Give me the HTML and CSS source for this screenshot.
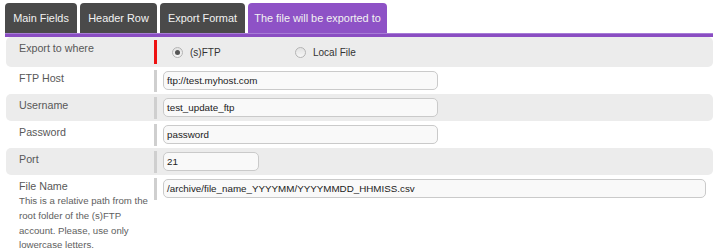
FILE: index.html
```html
<!DOCTYPE html>
<html>
<head>
<meta charset="utf-8">
<link rel="stylesheet" href="styles.css">
</head>
<body>
<div class="page">
  <div class="tabs">
    <div class="tab t1">Main Fields</div>
    <div class="tab t2">Header Row</div>
    <div class="tab t3">Export Format</div>
    <div class="tab t4 active">The file will be exported to</div>
  </div>
  <div class="tabline"></div>
  <div class="rows">
    <div class="row gray tall">
      <div class="label">Export to where</div>
      <div class="sep red"></div>
      <div class="control radios">
        <label class="opt first"><span class="radio checked"></span><span>(s)FTP</span></label>
        <label class="opt"><span class="radio"></span><span>Local File</span></label>
      </div>
    </div>
    <div class="row">
      <div class="label">FTP Host</div>
      <div class="sep"></div>
      <div class="control"><div class="input mid">ftp://test.myhost.com</div></div>
    </div>
    <div class="row gray">
      <div class="label">Username</div>
      <div class="sep"></div>
      <div class="control"><div class="input mid">test_update_ftp</div></div>
    </div>
    <div class="row">
      <div class="label">Password</div>
      <div class="sep"></div>
      <div class="control"><div class="input mid">password</div></div>
    </div>
    <div class="row gray">
      <div class="label">Port</div>
      <div class="sep"></div>
      <div class="control"><div class="input short">21</div></div>
    </div>
    <div class="row">
      <div class="label"><div class="name">File Name</div>
        <div class="help">This is a relative path from the root folder of the (s)FTP account. Please, use only lowercase letters.</div>
      </div>
      <div class="sep"></div>
      <div class="control"><div class="input long">/archive/file_name_YYYYMM/YYYYMMDD_HHMISS.csv</div></div>
    </div>
  </div>
</div>
</body>
</html>
```

FILE: styles.css
```css
* { box-sizing: border-box; }
html, body { margin: 0; padding: 0; background: #fff; }
body {
  font-family: "Liberation Sans", Arial, sans-serif;
  width: 718px;
  height: 250px;
  overflow: hidden;
}
.page { padding: 3px 5px 0 5px; }
.tabs { display: flex; gap: 3px; }
.tab {
  height: 30px;
  display: flex;
  align-items: center;
  justify-content: center;
  background: #4a4a4a;
  color: #f2f2f2;
  font-size: 10.9px;
  border-radius: 4px 4px 0 0;
  white-space: nowrap;
}
.tab.t1 { width: 72px; }
.tab.t2 { width: 77px; }
.tab.t3 { width: 85px; }
.tab.t4 { width: 139px; }
.tab.active { background: #8e52c6; }
.tabline {
  height: 4px;
  background: #8a4dc2;
  border-top: 1px solid #a77cd6;
}
.rows { padding-left: 1px; }
.row {
  display: flex;
  align-items: flex-start;
  padding: 3px 0 2px;
  border-radius: 5px;
}
.row.gray { background: #ececec; }
.row.tall { padding: 3px 0 3px; }
.label {
  width: 148px;
  flex: none;
  padding: 1px 5px 0 13px;
  font-size: 10.7px;
  line-height: 15px;
  color: #585858;
}
.help {
  font-size: 9.64px;
  line-height: 14.8px;
  color: #606060;
}
.sep {
  width: 3px;
  height: 22px;
  flex: none;
  background: #cfcfcf;
}
.sep.red { background: #ee1111; height: 24px; }
.control { padding: 1px 0 0 6px; }
.radios { display: flex; align-items: center; height: 24px; padding: 0 0 0 15px; }
.opt {
  display: flex;
  align-items: center;
  gap: 7px;
  font-size: 10px;
  color: #333;
}
.opt.first { width: 123px; }
.radio {
  width: 11px;
  height: 11px;
  border-radius: 50%;
  border: 1px solid #b4b4b4;
  background: linear-gradient(#e2e2e2, #f6f6f6);
  display: flex;
  align-items: center;
  justify-content: center;
}
.radio.checked::after {
  content: "";
  width: 5px;
  height: 5px;
  border-radius: 50%;
  background: #555;
}
.input {
  height: 19px;
  border: 1px solid #cacaca;
  border-radius: 5px;
  background: #f9f9f9;
  padding: 0 3px;
  font-size: 9.8px;
  line-height: 17px;
  color: #222;
  white-space: nowrap;
}
.input.mid { width: 275px; }
.input.short { width: 96px; }
.input.long { width: 543px; }
```
